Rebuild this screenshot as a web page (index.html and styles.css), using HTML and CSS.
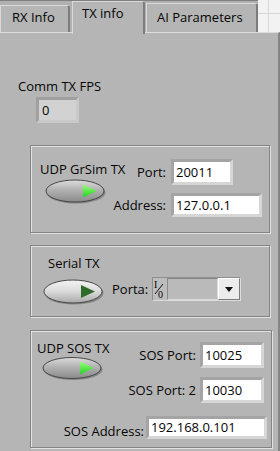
FILE: index.html
```html
<!DOCTYPE html>
<html lang="en">
<head>
  <meta charset="UTF-8">
  <title>TX info</title>
  <link rel="stylesheet" href="styles.css">
</head>
<body>
  <div class="window">
    <div class="tabstrip">
      <div class="tab tab-first">RX Info</div>
      <div class="tab tab-active">TX info</div>
      <div class="tab tab-last">AI Parameters</div>
      <div class="tab-filler"></div>
    </div>

    <div class="panel">
      <div class="fps">
        <div class="label">Comm TX FPS</div>
        <div class="indicator">0</div>
      </div>

      <!-- UDP GrSim -->
      <div class="group group-grsim">
        <div class="switch-col">
          <div class="label">UDP GrSim TX</div>
          <svg class="switch" width="61" height="25" viewBox="0 0 61 25">
            <defs>
              <linearGradient id="sw-gray" x1="0" y1="0" x2="0" y2="1">
                <stop offset="0" stop-color="#dcdcdc"/>
                <stop offset="0.45" stop-color="#b2b2b2"/>
                <stop offset="1" stop-color="#8a8a8a"/>
              </linearGradient>
              <linearGradient id="led-on" x1="0" y1="0" x2="0" y2="1">
                <stop offset="0" stop-color="#9bff7a"/>
                <stop offset="1" stop-color="#22d022"/>
              </linearGradient>
            </defs>
            <ellipse cx="31" cy="13.5" rx="29.5" ry="11" fill="#555555" opacity="0.5"/>
            <ellipse cx="30" cy="12" rx="29" ry="11" fill="url(#sw-gray)" stroke="#474747"/>
            <path d="M38 5.5 L52 12 L38 18.5 Z" fill="url(#led-on)"/>
          </svg>
        </div>
        <div class="fields fields-grsim">
          <div class="field">
            <span class="field-label">Port:</span>
            <span class="input input-port">20011</span>
          </div>
          <div class="field">
            <span class="field-label">Address:</span>
            <span class="input input-addr">127.0.0.1</span>
          </div>
        </div>
      </div>

      <!-- Serial -->
      <div class="group group-serial">
        <div class="switch-col">
          <div class="label">Serial TX</div>
          <svg class="switch" width="61" height="26" viewBox="0 0 61 26">
            <defs>
              <linearGradient id="sw-light" x1="0" y1="0" x2="0" y2="1">
                <stop offset="0" stop-color="#f4f4f4"/>
                <stop offset="0.5" stop-color="#dadada"/>
                <stop offset="1" stop-color="#a9a9a9"/>
              </linearGradient>
            </defs>
            <ellipse cx="31" cy="14" rx="29.5" ry="11.5" fill="#555555" opacity="0.5"/>
            <ellipse cx="30" cy="12.5" rx="29" ry="11.5" fill="url(#sw-light)" stroke="#474747"/>
            <path d="M38 6 L52 12.5 L38 19 Z" fill="#2f6b2c"/>
          </svg>
        </div>
        <div class="serial-row">
          <span class="field-label">Porta:</span>
          <div class="visa">
            <svg class="visa-icon" width="14" height="21" viewBox="0 0 14 21">
              <text x="1" y="9" font-size="10" font-family="Liberation Serif, serif">I</text>
              <line x1="2" y1="15" x2="10" y2="5" stroke="#111" stroke-width="1"/>
              <text x="5" y="19" font-size="10" font-family="Liberation Serif, serif">0</text>
            </svg>
            <span class="visa-box"></span>
            <span class="visa-btn"></span>
          </div>
        </div>
      </div>

      <!-- UDP SOS -->
      <div class="group group-sos">
        <div class="sos-top">
          <div class="switch-col">
            <div class="label">UDP SOS TX</div>
            <svg class="switch" width="61" height="24" viewBox="0 0 61 24">
              <ellipse cx="31" cy="12.5" rx="29.5" ry="10.5" fill="#555555" opacity="0.5"/>
              <ellipse cx="30" cy="11" rx="29" ry="10.5" fill="url(#sw-gray)" stroke="#474747"/>
              <path d="M38 4.5 L52 11 L38 17.5 Z" fill="url(#led-on)"/>
            </svg>
          </div>
          <div class="fields fields-sos">
            <div class="field">
              <span class="field-label">SOS Port:</span>
              <span class="input input-sos">10025</span>
            </div>
            <div class="field">
              <span class="field-label">SOS Port: 2</span>
              <span class="input input-sos">10030</span>
            </div>
          </div>
        </div>
        <div class="sos-addr">
          <span class="field-label">SOS Address:</span>
          <span class="input input-sos-addr">192.168.0.101</span>
        </div>
      </div>
    </div>
  </div>
</body>
</html>
```

FILE: styles.css
```css
* {
  box-sizing: border-box;
}
body {
  margin: 0;
  font-family: "Open Sans", "Liberation Sans", sans-serif;
  font-size: 13px;
  color: #050505;
  background-color: #b5b5b5;
}
.window {
  width: 280px;
  height: 451px;
  overflow: hidden;
}

/* tabs */
.tabstrip {
  display: flex;
  align-items: flex-end;
  height: 32px;
  background-color: #b1b1b1;
  box-shadow: inset 0 1px #808080;
}
.tab {
  background-color: #b5b5b5;
  border-top: 1px solid #dadada;
  border-left: 1px solid #dadada;
  border-right: 2px solid #7c7c7c;
  border-top-right-radius: 3px;
  line-height: 16px;
  white-space: nowrap;
}
.tab-first {
  width: 70px;
  height: 27px;
  padding: 3px 0 0 11px;
}
.tab-active {
  width: 73px;
  height: 33px;
  margin-left: 2px;
  margin-bottom: -2px;
  padding: 3px 0 0 9px;
  z-index: 1;
}
.tab-last {
  width: 112px;
  height: 29px;
  margin-left: 1px;
  padding: 5px 0 0 10px;
}
.tab-filler {
  flex: 1;
  align-self: stretch;
  background-color: #f2f2f2;
  background-image: linear-gradient(#d6d6d6, #d6d6d6), linear-gradient(#d6d6d6, #d6d6d6);
  background-size: 1px 100%, 100% 1px;
  background-position: 10px 0, 0 13px;
  background-repeat: no-repeat;
}

/* panel */
.panel {
  height: 419px;
  border-top: 1px solid #dcdcdc;
  border-right: 2px solid #858585;
  padding-top: 45px;
}
.label {
  line-height: 16px;
  white-space: nowrap;
}
.fps {
  padding-left: 18px;
}
.indicator {
  width: 43px;
  height: 26px;
  margin: 3px 0 0 18px;
  padding-left: 3px;
  line-height: 20px;
  background-color: #d2d2d2;
  border: 3px solid;
  border-color: #a0a0a0 #c9c9c9 #c9c9c9 #a0a0a0;
}

/* group boxes */
.group {
  display: flex;
  margin-left: 30px;
  width: 240px;
  border: 1px solid #848484;
  box-shadow: inset 1px 1px #e2e2e2, 1px 1px #e2e2e2;
}
.switch {
  display: block;
}
.field {
  display: flex;
  align-items: center;
}
.field-label {
  white-space: nowrap;
  line-height: 16px;
}
.fields .field-label {
  text-align: right;
  margin-right: 5px;
}
.input {
  display: block;
  height: 24px;
  padding-left: 2px;
  line-height: 18px;
  background-color: #ffffff;
  border: 3px solid;
  border-color: #a4a4a4 #d6d6d6 #d6d6d6 #a4a4a4;
  white-space: nowrap;
}

.group-grsim {
  height: 88px;
  margin-top: 22px;
}
.group-grsim .switch-col {
  width: 80px;
  padding: 15px 0 0 9px;
}
.group-grsim .switch {
  margin: 2px 0 0 5px;
}
.fields-grsim {
  display: flex;
  flex-direction: column;
  gap: 8px;
  padding-top: 13px;
}
.fields-grsim .field-label {
  width: 55px;
}
.input-port {
  width: 62px;
  height: 26px;
  line-height: 20px;
}
.input-addr {
  width: 91px;
}

.group-serial {
  height: 72px;
  margin-top: 12px;
}
.group-serial .switch-col {
  width: 79px;
  padding: 9px 0 0 17px;
}
.group-serial .switch {
  margin: 8px 0 0 -5px;
}
.serial-row {
  display: flex;
  align-items: center;
  gap: 4px;
  padding: 31px 0 0 2px;
  align-self: flex-start;
}
.visa {
  display: flex;
  width: 89px;
  height: 24px;
  border: 1px solid #8e8e8e;
  border-right-color: #dcdcdc;
  border-bottom-color: #dcdcdc;
  background-color: #bdbdbd;
}
.visa-icon {
  display: block;
  flex: none;
  margin-top: 1px;
}
.visa-box {
  flex: 1;
  background-color: #bababa;
  border: 1px solid;
  border-color: #8a8a8a #d8d8d8 #d8d8d8 #8a8a8a;
}
.visa-btn {
  display: flex;
  align-items: center;
  justify-content: center;
  width: 22px;
  background-color: #ececec;
  border: 1px solid;
  border-color: #ffffff #7a7a7a #7a7a7a #ffffff;
}
.visa-btn::after {
  content: "";
  border-left: 4px solid transparent;
  border-right: 4px solid transparent;
  border-top: 5px solid #111111;
}

.group-sos {
  flex-direction: column;
  width: 242px;
  height: 118px;
  margin-top: 13px;
}
.sos-top {
  display: flex;
}
.group-sos .switch-col {
  width: 79px;
  padding: 9px 0 0 6px;
}
.group-sos .switch {
  margin: 1px 0 0 5px;
}
.fields-sos {
  display: flex;
  flex-direction: column;
  gap: 9px;
  padding-top: 11px;
}
.fields-sos .field-label {
  width: 86px;
  margin-right: 4px;
}
.input-sos {
  width: 64px;
  height: 26px;
  line-height: 20px;
}
.sos-addr {
  display: flex;
  align-items: flex-end;
  justify-content: flex-end;
  gap: 2px;
  margin-top: 13px;
  padding-right: 4px;
}
.input-sos-addr {
  width: 121px;
  height: 23px;
  line-height: 17px;
}
```
